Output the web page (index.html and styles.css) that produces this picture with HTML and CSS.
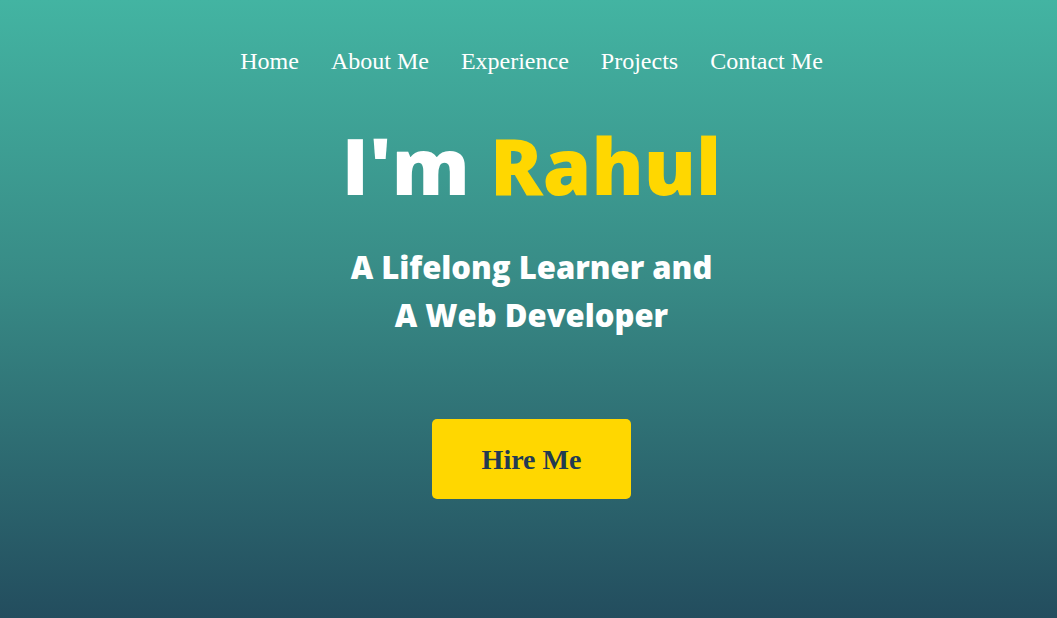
FILE: index.html
```html
<!DOCTYPE html>
<html lang="en">
<head>
<meta charset="utf-8">
<title>Rahul</title>
<link rel="stylesheet" href="styles.css">
</head>
<body>
<section class="hero">
  <nav class="nav">
    <a href="#">Home</a>
    <a href="#">About Me</a>
    <a href="#">Experience</a>
    <a href="#">Projects</a>
    <a href="#">Contact Me</a>
  </nav>
  <h1 class="title">I'm <span class="name">Rahul</span></h1>
  <h2 class="subtitle">A Lifelong Learner and<br>A Web Developer</h2>
  <button class="hire">Hire Me</button>
</section>
</body>
</html>
```
FILE: styles.css
```css
html, body {
  margin: 0;
  padding: 0;
  height: 100%;
}
body {
  background: linear-gradient(to bottom, #43b4a2 0%, #388b86 45%, #234d5e 100%);
  font-family: "Liberation Serif", "Times New Roman", serif;
  color: #fff;
}
.hero {
  height: 618px;
  display: flex;
  flex-direction: column;
  align-items: center;
  box-sizing: border-box;
  padding-top: 48px;
  padding-left: 6px;
}
.nav {
  display: flex;
  gap: 32px;
  font-size: 24px;
  line-height: 27px;
}
.nav a {
  color: #fff;
  text-decoration: none;
}
.title {
  margin: 42px 0 0;
  font-family: "Open Sans", Lato, sans-serif;
  font-weight: 800;
  font-size: 78px;
  line-height: 96px;
  letter-spacing: 0;
}
.name {
  color: #ffd700;
}
.subtitle {
  margin: 30px 0 0;
  font-family: "Open Sans", Lato, sans-serif;
  font-weight: 800;
  font-size: 31px;
  line-height: 48px;
  text-align: center;
}
.hire {
  margin-top: 80px;
  width: 199px;
  height: 80px;
  padding: 2px 0 0;
  border: none;
  border-radius: 5px;
  background: #ffd700;
  color: #233a52;
  font-family: "Liberation Serif", "Times New Roman", serif;
  font-weight: 700;
  font-size: 28px;
  cursor: pointer;
}
```
